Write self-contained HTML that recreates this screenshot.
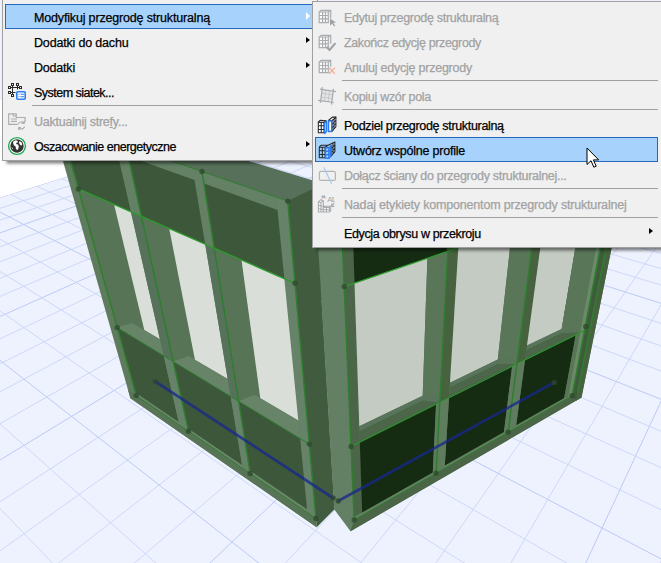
<!DOCTYPE html>
<html><head><meta charset="utf-8"><title>menu</title>
<style>
html,body{margin:0;padding:0;}
body{width:661px;height:563px;overflow:hidden;position:relative;background:#eef2fe;font-family:"Liberation Sans",sans-serif;}
#scene{position:absolute;left:0;top:0;}
#m1,#m2{position:absolute;background:#f0f0f0;border:1px solid #a0a0a0;box-sizing:border-box;}
#m1{left:2px;top:-1px;width:316px;height:162px;box-shadow:3px 3px 3px -0.500px rgba(0,0,0,0.5);}
#m2{left:312px;top:1px;width:352px;height:247px;box-shadow:3px 3px 3px -0.500px rgba(0,0,0,0.5);}
.it{position:absolute;left:2px;right:2px;height:25px;box-sizing:border-box;font-size:12.5px;line-height:25px;color:#000;white-space:nowrap;}
#m1 .it{right:0px;}
#m1 .ar{right:7px;}
#m2 .it{right:5px;}
.it .tx{position:absolute;left:29px;top:2px;-webkit-text-stroke:0.25px currentColor;}
.it.dis{color:#a2a2a2;}
.it.hl{background:#a6d2fc;outline:1px solid #2468bd;outline-offset:-1px;}
.ic{position:absolute;left:2px;top:3px;width:22px;height:20px;}
.ar{position:absolute;right:2px;top:8px;width:0;height:0;border-left:4px solid #000;border-top:3.500px solid transparent;border-bottom:3.500px solid transparent;}
#m2 .ar{right:5px;}
.ar.w{border-left-color:#fff;border-left-width:4.500px;border-top-width:4px;border-bottom-width:4px;top:7.500px;}
.sep{position:absolute;left:29px;right:5px;height:1px;background:#a0a0a0;}
u{text-decoration:underline;}
#cur{position:absolute;left:586px;top:147px;}
</style></head><body>
<svg id="scene" width="661" height="563" viewBox="0 0 661 563">
<defs><clipPath id="gridclip"><polygon points="0,195.5 66,177 120,140 661,140 661,563 0,563"/></clipPath></defs>
<rect x="0" y="0" width="661" height="563" fill="#eef2fe"/>
<g stroke-width="1">
<line x1="5364.3" y1="9635.0" x2="937.8" y2="36.0" stroke="#cdd8f8"/>
<line x1="4242.7" y1="9627.1" x2="924.1" y2="34.9" stroke="#cdd8f8"/>
<line x1="3121.1" y1="9619.1" x2="910.7" y2="33.8" stroke="#cdd8f8"/>
<line x1="1999.5" y1="9611.2" x2="897.6" y2="32.7" stroke="#bccaf4"/>
<line x1="878.0" y1="9603.3" x2="884.6" y2="31.6" stroke="#cdd8f8"/>
<line x1="-243.6" y1="9595.4" x2="871.9" y2="30.6" stroke="#cdd8f8"/>
<line x1="-1365.2" y1="9587.5" x2="859.4" y2="29.5" stroke="#cdd8f8"/>
<line x1="-2486.8" y1="9579.6" x2="847.1" y2="28.5" stroke="#cdd8f8"/>
<line x1="-3608.4" y1="9571.6" x2="835.1" y2="27.5" stroke="#bccaf4"/>
<line x1="-2351.3" y1="5478.5" x2="823.2" y2="26.5" stroke="#cdd8f8"/>
<line x1="-1805.8" y1="3769.1" x2="811.5" y2="25.6" stroke="#cdd8f8"/>
<line x1="-1516.6" y1="2862.8" x2="800.1" y2="24.6" stroke="#cdd8f8"/>
<line x1="-1337.4" y1="2301.3" x2="788.8" y2="23.7" stroke="#cdd8f8"/>
<line x1="-1215.4" y1="1919.2" x2="777.7" y2="22.8" stroke="#bccaf4"/>
<line x1="-1127.1" y1="1642.5" x2="766.8" y2="21.9" stroke="#cdd8f8"/>
<line x1="-1060.2" y1="1432.7" x2="756.0" y2="21.0" stroke="#cdd8f8"/>
<line x1="-1007.7" y1="1268.3" x2="745.4" y2="20.1" stroke="#cdd8f8"/>
<line x1="-965.5" y1="1135.9" x2="735.0" y2="19.2" stroke="#cdd8f8"/>
<line x1="-930.7" y1="1027.1" x2="724.8" y2="18.4" stroke="#bccaf4"/>
<line x1="-901.7" y1="936.0" x2="714.7" y2="17.5" stroke="#cdd8f8"/>
<line x1="-877.0" y1="858.7" x2="704.8" y2="16.7" stroke="#cdd8f8"/>
<line x1="-855.8" y1="792.2" x2="695.0" y2="15.9" stroke="#cdd8f8"/>
<line x1="-837.3" y1="734.4" x2="685.4" y2="15.1" stroke="#cdd8f8"/>
<line x1="-821.2" y1="683.7" x2="675.9" y2="14.3" stroke="#bccaf4"/>
<line x1="-806.9" y1="638.9" x2="666.5" y2="13.5" stroke="#cdd8f8"/>
<line x1="-794.1" y1="599.0" x2="657.3" y2="12.8" stroke="#cdd8f8"/>
<line x1="-782.7" y1="563.3" x2="648.3" y2="12.0" stroke="#cdd8f8"/>
<line x1="-772.4" y1="531.1" x2="639.3" y2="11.3" stroke="#cdd8f8"/>
<line x1="-763.1" y1="501.9" x2="630.5" y2="10.6" stroke="#bccaf4"/>
<line x1="-754.7" y1="475.3" x2="621.8" y2="9.8" stroke="#cdd8f8"/>
<line x1="-746.9" y1="451.0" x2="613.3" y2="9.1" stroke="#cdd8f8"/>
<line x1="-739.8" y1="428.8" x2="604.8" y2="8.4" stroke="#bccaf4"/>
<line x1="-2101.1" y1="9582.3" x2="-651.9" y2="401.3" stroke="#cdd8f8"/>
<line x1="-544.9" y1="9593.3" x2="-573.0" y2="376.6" stroke="#bccaf4"/>
<line x1="1011.3" y1="9604.3" x2="-501.9" y2="354.4" stroke="#cdd8f8"/>
<line x1="2567.6" y1="9615.2" x2="-437.3" y2="334.2" stroke="#cdd8f8"/>
<line x1="4123.8" y1="9626.2" x2="-378.5" y2="315.8" stroke="#cdd8f8"/>
<line x1="4567.3" y1="7906.8" x2="-324.7" y2="299.0" stroke="#bccaf4"/>
<line x1="2846.9" y1="4176.0" x2="-275.3" y2="283.6" stroke="#cdd8f8"/>
<line x1="2222.1" y1="2821.1" x2="-229.8" y2="269.3" stroke="#cdd8f8"/>
<line x1="1899.1" y1="2120.7" x2="-187.7" y2="256.2" stroke="#cdd8f8"/>
<line x1="1701.8" y1="1692.7" x2="-148.7" y2="244.0" stroke="#bccaf4"/>
<line x1="1568.7" y1="1404.2" x2="-112.4" y2="232.6" stroke="#cdd8f8"/>
<line x1="1472.9" y1="1196.5" x2="-78.6" y2="222.1" stroke="#cdd8f8"/>
<line x1="1400.6" y1="1039.8" x2="-47.0" y2="212.2" stroke="#cdd8f8"/>
<line x1="1344.2" y1="917.4" x2="-17.4" y2="202.9" stroke="#bccaf4"/>
<line x1="1298.9" y1="819.1" x2="10.4" y2="194.3" stroke="#cdd8f8"/>
<line x1="1261.7" y1="738.5" x2="36.5" y2="186.1" stroke="#cdd8f8"/>
<line x1="1230.7" y1="671.2" x2="61.1" y2="178.4" stroke="#cdd8f8"/>
<line x1="1204.3" y1="614.1" x2="84.3" y2="171.2" stroke="#bccaf4"/>
<line x1="1181.7" y1="565.1" x2="106.2" y2="164.3" stroke="#cdd8f8"/>
<line x1="1162.1" y1="522.5" x2="127.0" y2="157.8" stroke="#cdd8f8"/>
<line x1="1144.9" y1="485.2" x2="146.7" y2="151.6" stroke="#cdd8f8"/>
<line x1="1129.7" y1="452.3" x2="165.4" y2="145.8" stroke="#bccaf4"/>
<line x1="1116.2" y1="423.0" x2="183.2" y2="140.3" stroke="#cdd8f8"/>
<line x1="1104.1" y1="396.8" x2="200.1" y2="135.0" stroke="#cdd8f8"/>
<line x1="1093.2" y1="373.2" x2="216.2" y2="129.9" stroke="#cdd8f8"/>
<line x1="1083.4" y1="351.8" x2="231.6" y2="125.1" stroke="#bccaf4"/>
<line x1="1074.4" y1="332.3" x2="246.2" y2="120.5" stroke="#cdd8f8"/>
<line x1="1066.2" y1="314.5" x2="260.3" y2="116.1" stroke="#cdd8f8"/>
<line x1="1058.7" y1="298.2" x2="273.7" y2="111.9" stroke="#cdd8f8"/>
<line x1="1051.8" y1="283.2" x2="286.6" y2="107.9" stroke="#bccaf4"/>
<line x1="1045.4" y1="269.4" x2="298.9" y2="104.1" stroke="#cdd8f8"/>
<line x1="1039.4" y1="256.5" x2="310.8" y2="100.4" stroke="#cdd8f8"/>
<line x1="1034.0" y1="244.6" x2="322.1" y2="96.8" stroke="#cdd8f8"/>
<line x1="1028.8" y1="233.5" x2="333.1" y2="93.4" stroke="#bccaf4"/>
<line x1="1024.0" y1="223.1" x2="343.6" y2="90.1" stroke="#cdd8f8"/>
<line x1="1019.6" y1="213.4" x2="353.7" y2="86.9" stroke="#cdd8f8"/>
<line x1="1015.4" y1="204.3" x2="363.4" y2="83.9" stroke="#cdd8f8"/>
<line x1="1011.4" y1="195.8" x2="372.8" y2="81.0" stroke="#bccaf4"/>
<line x1="1007.7" y1="187.7" x2="381.9" y2="78.1" stroke="#cdd8f8"/>
<line x1="1004.2" y1="180.1" x2="390.6" y2="75.4" stroke="#cdd8f8"/>
<line x1="1000.9" y1="173.0" x2="399.1" y2="72.8" stroke="#cdd8f8"/>
<line x1="997.8" y1="166.2" x2="407.2" y2="70.2" stroke="#bccaf4"/>
<line x1="994.8" y1="159.7" x2="415.1" y2="67.7" stroke="#cdd8f8"/>
<line x1="992.0" y1="153.6" x2="422.8" y2="65.3" stroke="#cdd8f8"/>
<line x1="989.3" y1="147.9" x2="430.2" y2="63.0" stroke="#cdd8f8"/>
<line x1="986.8" y1="142.3" x2="437.3" y2="60.8" stroke="#bccaf4"/>
<line x1="984.4" y1="137.1" x2="444.3" y2="58.6" stroke="#cdd8f8"/>
<line x1="982.1" y1="132.1" x2="451.0" y2="56.5" stroke="#cdd8f8"/>
<line x1="979.8" y1="127.3" x2="457.5" y2="54.5" stroke="#cdd8f8"/>
<line x1="977.7" y1="122.7" x2="463.8" y2="52.5" stroke="#bccaf4"/>
<line x1="975.7" y1="118.3" x2="470.0" y2="50.6" stroke="#cdd8f8"/>
<line x1="973.8" y1="114.2" x2="476.0" y2="48.7" stroke="#cdd8f8"/>
<line x1="971.9" y1="110.1" x2="481.8" y2="46.9" stroke="#cdd8f8"/>
<line x1="970.2" y1="106.3" x2="487.4" y2="45.1" stroke="#bccaf4"/>
<line x1="968.5" y1="102.6" x2="492.9" y2="43.4" stroke="#cdd8f8"/>
<line x1="966.8" y1="99.0" x2="498.2" y2="41.8" stroke="#cdd8f8"/>
<line x1="965.2" y1="95.6" x2="503.4" y2="40.1" stroke="#cdd8f8"/>
<line x1="963.7" y1="92.3" x2="508.5" y2="38.6" stroke="#bccaf4"/>
<line x1="962.3" y1="89.2" x2="513.4" y2="37.0" stroke="#cdd8f8"/>
<line x1="960.9" y1="86.1" x2="518.2" y2="35.5" stroke="#cdd8f8"/>
<line x1="959.5" y1="83.2" x2="522.8" y2="34.1" stroke="#cdd8f8"/>
<line x1="958.2" y1="80.3" x2="527.4" y2="32.6" stroke="#bccaf4"/>
<line x1="956.9" y1="77.6" x2="531.8" y2="31.3" stroke="#cdd8f8"/>
<line x1="955.7" y1="75.0" x2="536.2" y2="29.9" stroke="#cdd8f8"/>
<line x1="954.5" y1="72.4" x2="540.4" y2="28.6" stroke="#cdd8f8"/>
<line x1="953.4" y1="69.9" x2="544.5" y2="27.3" stroke="#bccaf4"/>
<line x1="952.3" y1="67.5" x2="548.5" y2="26.0" stroke="#cdd8f8"/>
<line x1="951.2" y1="65.2" x2="552.5" y2="24.8" stroke="#cdd8f8"/>
<line x1="950.2" y1="62.9" x2="556.3" y2="23.6" stroke="#cdd8f8"/>
<line x1="949.2" y1="60.8" x2="560.1" y2="22.4" stroke="#bccaf4"/>
<line x1="948.2" y1="58.7" x2="563.7" y2="21.3" stroke="#cdd8f8"/>
<line x1="947.3" y1="56.6" x2="567.3" y2="20.2" stroke="#cdd8f8"/>
<line x1="946.3" y1="54.6" x2="570.8" y2="19.1" stroke="#cdd8f8"/>
</g>
<polygon points="-739.8,428.8 165.4,145.8 165.4,100.0 -50.0,100.0 -50.0,428.8" fill="#ffffff" />
<polygon points="40.0,98.0 250.0,161.4 340.0,188.8 340.0,300.0 300.0,300.0 288.0,201.2 63.5,161.8" fill="#56705a" />
<polygon points="340.5,200.9 636.4,124.5 581.5,397.6 350.5,531.2 354.2,519.9" fill="#567355" />
<polygon points="315.7,207.3 340.5,200.9 354.6,528.8 350.5,531.2 334.3,509.5" fill="#648064" />
<polygon points="314.2,207.3 315.7,207.3 334.3,509.5 332.8,509.0" fill="#648064" />
<polygon points="340.5,200.9 351.7,198.0 362.2,515.3 354.2,519.9" fill="#4a6548" />
<polygon points="351.7,198.0 451.9,172.2 447.7,251.3 354.5,283.1" fill="#152c13" />
<polygon points="354.5,283.1 427.4,258.2 422.7,395.8 359.3,426.3" fill="#c4cbc3" />
<polygon points="427.4,258.2 447.7,251.3 439.8,402.4 432.9,393.5 422.7,395.8" fill="#5a7659" />
<polygon points="359.3,426.3 422.7,395.8 432.9,393.5 439.8,402.4 359.8,442.1" fill="#58745a" />
<polygon points="359.4,431.2 422.5,400.5 439.8,402.4 359.8,442.1" fill="#4b6649" />
<polygon points="451.9,172.2 463.2,169.2 449.0,397.8 439.8,402.4" fill="#47623f" />
<polygon points="463.2,169.2 544.6,148.2 535.2,221.5 458.3,247.7" fill="#152c13" />
<polygon points="458.3,247.7 512.0,229.4 497.8,359.6 450.0,382.7" fill="#c4cbc3" />
<polygon points="512.0,229.4 535.2,221.5 516.9,364.0 509.3,357.3 497.8,359.6" fill="#5a7659" />
<polygon points="450.0,382.7 497.8,359.6 509.3,357.3 516.9,364.0 449.0,397.8" fill="#58745a" />
<polygon points="449.7,387.3 497.4,364.2 516.9,364.0 449.0,397.8" fill="#4b6649" />
<polygon points="544.6,148.2 554.2,145.7 525.0,360.0 516.9,364.0" fill="#47623f" />
<polygon points="554.2,145.7 618.2,129.2 605.4,197.5 544.3,218.4" fill="#152c13" />
<polygon points="544.3,218.4 582.5,205.4 561.7,328.9 527.0,345.6" fill="#c4cbc3" />
<polygon points="582.5,205.4 605.4,197.5 580.2,332.6 572.8,326.6 561.7,328.9" fill="#5a7659" />
<polygon points="527.0,345.6 561.7,328.9 572.8,326.6 580.2,332.6 525.0,360.0" fill="#58745a" />
<polygon points="526.4,350.0 561.0,333.2 580.2,332.6 525.0,360.0" fill="#4b6649" />
<polygon points="354.1,517.0 564.2,398.0 572.1,395.8 354.2,519.9" fill="#648261" />
<polygon points="354.2,519.9 572.1,395.8 581.5,397.6 350.5,531.2" fill="#4a6647" />
<polygon points="359.8,442.1 436.1,404.2 432.8,472.4 362.1,512.5" fill="#152c13" />
<polygon points="449.0,397.8 512.1,366.4 504.0,432.1 444.8,465.6" fill="#152c13" />
<polygon points="525.0,360.0 575.8,334.8 564.2,398.0 516.1,425.2" fill="#152c13" />
<polygon points="436.1,404.2 449.0,397.8 444.6,468.4 432.7,475.2" fill="#5f7d5e" />
<polygon points="512.1,366.4 525.0,360.0 515.8,427.9 503.6,434.8" fill="#5f7d5e" />
<polygon points="582.5,205.4 605.4,197.5 580.2,332.6 561.7,328.9" fill="#5a7659" />
<polygon points="575.8,334.8 580.2,332.6 567.9,398.2 564.2,398.0" fill="#587556" />
<polygon points="618.2,129.2 623.2,127.9 572.1,395.8 567.9,398.2" fill="#6a8a68" />
<polygon points="623.2,127.9 629.9,126.2 576.1,400.7 572.1,395.8" fill="#3f5a3c" />
<polygon points="629.9,126.2 636.4,124.5 581.5,397.6 576.1,400.7" fill="#47623f" />
<polyline points="344.2,286.6 605.4,197.5" fill="none" stroke="#2c9a2c" stroke-width="1.2" />
<polyline points="351.1,446.5 584.6,330.4" fill="none" stroke="#2c9a2c" stroke-width="1.1" />
<polyline points="354.2,519.9 572.1,395.8" fill="none" stroke="#2f7d2f" stroke-width="1.0" />
<polyline points="340.5,200.9 354.2,519.9" fill="none" stroke="#2f7d2f" stroke-width="1.5" />
<polyline points="451.9,172.2 436.1,473.3" fill="none" stroke="#2f7d2f" stroke-width="1.5" />
<polyline points="544.6,148.2 508.1,432.3" fill="none" stroke="#2f7d2f" stroke-width="1.5" />
<polyline points="623.2,127.9 572.1,395.8" fill="none" stroke="#2f7d2f" stroke-width="1.5" />
<polyline points="629.9,126.2 577.6,392.7" fill="none" stroke="#2f7d2f" stroke-width="1.5" />
<polygon points="287.7,201.1 312.4,189.0 314.5,188.0 334.3,509.5 316.7,527.3" fill="#415b3f" />
<polygon points="51.1,119.2 287.7,201.1 316.7,527.3 130.4,398.2" fill="#5f7b5d" />
<polygon points="59.7,122.2 287.7,201.1 295.0,283.3 78.4,188.9" fill="#648166" />
<polygon points="135.4,392.5 315.7,515.2 315.9,518.5 136.3,395.6" fill="#6b876a" />
<polygon points="128.1,390.0 315.9,518.5 316.7,527.3 130.4,398.2" fill="#587456" />
<polygon points="276.2,197.1 287.7,201.1 315.9,518.5 307.4,512.6" fill="#66836a" />
<polygon points="62.6,132.6 117.3,152.3 130.9,211.8 78.4,188.9" fill="#3d573b" />
<polygon points="78.4,188.9 114.1,204.5 144.3,330.1 132.1,322.9 117.2,327.6" fill="#587456" />
<polygon points="114.1,204.5 130.9,211.8 159.9,339.2 144.3,330.1" fill="#d9dfd8" />
<polygon points="117.2,327.6 132.1,322.9 159.9,339.2 163.7,355.7" fill="#688468" />
<polygon points="117.2,327.6 163.7,355.7 178.7,422.0 135.4,392.5" fill="#3d573b" />
<polygon points="128.2,156.2 194.5,180.1 205.2,244.2 141.4,216.4" fill="#3d573b" />
<polygon points="141.4,216.4 169.2,228.5 195.0,359.9 188.6,356.1 173.2,361.6" fill="#587456" />
<polygon points="169.2,228.5 205.2,244.2 227.7,379.1 195.0,359.9" fill="#d9dfd8" />
<polygon points="173.2,361.6 188.6,356.1 227.7,379.1 230.6,396.4" fill="#688468" />
<polygon points="173.2,361.6 230.6,396.4 242.1,465.1 187.8,428.2" fill="#3d573b" />
<polygon points="204.0,183.5 277.5,210.0 284.3,278.6 214.3,248.1" fill="#3d573b" />
<polygon points="214.3,248.1 241.5,260.0 260.3,398.3 254.4,394.8 238.7,401.3" fill="#587456" />
<polygon points="241.5,260.0 284.3,278.6 298.3,420.6 260.3,398.3" fill="#d9dfd8" />
<polygon points="238.7,401.3 254.4,394.8 298.3,420.6 300.1,438.5" fill="#688468" />
<polygon points="238.7,401.3 300.1,438.5 307.0,509.3 249.7,470.3" fill="#3d573b" />
<polygon points="130.9,211.8 141.4,216.4 173.2,361.6 163.7,355.7" fill="#56725a" />
<polygon points="163.7,355.7 173.2,361.6 188.5,431.3 179.4,425.1" fill="#66836a" />
<polygon points="205.2,244.2 214.3,248.1 238.7,401.3 230.6,396.4" fill="#56725a" />
<polygon points="230.6,396.4 238.7,401.3 250.2,473.5 242.7,468.4" fill="#66836a" />
<polyline points="59.7,122.2 136.3,395.6" fill="none" stroke="#2f7d2f" stroke-width="1.5" />
<polyline points="125.8,145.1 188.5,431.3" fill="none" stroke="#2f7d2f" stroke-width="1.5" />
<polyline points="202.0,171.5 250.2,473.5" fill="none" stroke="#2f7d2f" stroke-width="1.5" />
<polyline points="287.7,201.1 315.9,518.5" fill="none" stroke="#2f7d2f" stroke-width="1.5" />
<polyline points="59.7,122.2 287.7,201.1" fill="none" stroke="#2f7d2f" stroke-width="1.0" />
<polyline points="78.4,188.9 295.0,283.3" fill="none" stroke="#2c9a2c" stroke-width="1.3" />
<polyline points="117.2,327.6 309.3,444.1" fill="none" stroke="#2f7d2f" stroke-width="1.0" />
<polyline points="136.3,395.6 315.9,518.5" fill="none" stroke="#2f7d2f" stroke-width="1.0" />
<polyline points="155.5,381.6 333.1,498.0" fill="none" stroke="#18288c" stroke-width="2.7" stroke-opacity="0.78" stroke-linecap="round"/>
<polyline points="338.2,501.0 554.3,382.4" fill="none" stroke="#18288c" stroke-width="2.7" stroke-opacity="0.78" stroke-linecap="round"/>
<circle cx="78.4" cy="188.9" r="2.7" fill="#2c4729" fill-opacity="0.72"/>
<circle cx="117.2" cy="327.6" r="2.7" fill="#2c4729" fill-opacity="0.72"/>
<circle cx="136.3" cy="395.6" r="2.7" fill="#2c4729" fill-opacity="0.72"/>
<circle cx="188.5" cy="431.3" r="2.7" fill="#2c4729" fill-opacity="0.72"/>
<circle cx="250.2" cy="473.5" r="2.7" fill="#2c4729" fill-opacity="0.72"/>
<circle cx="315.9" cy="518.5" r="2.7" fill="#2c4729" fill-opacity="0.72"/>
<circle cx="309.3" cy="444.1" r="2.7" fill="#2c4729" fill-opacity="0.72"/>
<circle cx="295.0" cy="283.3" r="2.7" fill="#2c4729" fill-opacity="0.72"/>
<circle cx="287.7" cy="201.1" r="2.7" fill="#2c4729" fill-opacity="0.72"/>
<circle cx="202.0" cy="171.5" r="2.7" fill="#2c4729" fill-opacity="0.72"/>
<circle cx="344.2" cy="286.6" r="2.7" fill="#2c4729" fill-opacity="0.72"/>
<circle cx="351.1" cy="446.5" r="2.7" fill="#2c4729" fill-opacity="0.72"/>
<circle cx="354.2" cy="519.9" r="2.7" fill="#2c4729" fill-opacity="0.72"/>
<circle cx="436.1" cy="473.3" r="2.7" fill="#2c4729" fill-opacity="0.72"/>
<circle cx="508.1" cy="432.3" r="2.7" fill="#2c4729" fill-opacity="0.72"/>
<circle cx="572.1" cy="395.8" r="2.7" fill="#2c4729" fill-opacity="0.72"/>
<circle cx="585.8" cy="326.4" r="2.7" fill="#2c4729" fill-opacity="0.72"/>
<circle cx="155.5" cy="381.6" r="2.7" fill="#2c4729" fill-opacity="0.72"/>
<circle cx="554.3" cy="382.4" r="2.7" fill="#2c4729" fill-opacity="0.72"/>
<circle cx="333.1" cy="498.0" r="2.7" fill="#2c4729" fill-opacity="0.72"/>
<circle cx="338.2" cy="501.0" r="2.7" fill="#2c4729" fill-opacity="0.72"/>
</svg>
<div id="m1">
<div class="it hl" style="top:4px"><span class="tx" style="letter-spacing:-0.167px">Modyfikuj przegrodę strukturalną</span><div class="ar w"></div></div>
<div class="it" style="top:29px"><span class="tx" style="letter-spacing:-0.175px">Dodatki do dachu</span><div class="ar"></div></div>
<div class="it" style="top:54px"><span class="tx" style="letter-spacing:-0.199px">Dodatki</span><div class="ar"></div></div>
<div class="it" style="top:79px"><div class="ic"><svg width="20" height="20" viewBox="0 0 20 20"><g fill="none" stroke="#2b2b2b" stroke-width="1"><path d="M2.500 5.500h11M2.500 10.500h6M5.500 2.500v11M10.500 2.500v5"/></g><g fill="#f0f0f0" stroke="#2b2b2b" stroke-width="1"><rect x="4.500" y="1.500" width="2" height="2"/><rect x="9.500" y="1.500" width="2" height="2"/><rect x="1.500" y="4.500" width="2" height="2"/><rect x="12.500" y="4.500" width="2" height="2"/><rect x="1.500" y="9.500" width="2" height="2"/><rect x="4.500" y="12.500" width="2" height="2"/></g><rect x="9.800" y="9.800" width="8.400" height="7.400" rx="1" fill="#fff" stroke="#2d7cf0" stroke-width="1.600"/><path d="M11.500 12.300h1M13.500 12.300h3.500M11.500 14.800h1M13.500 14.800h3.500" stroke="#2d7cf0" stroke-width="1.100"/></svg></div><span class="tx" style="letter-spacing:-0.515px">System siatek...</span></div>
<div class="sep" style="top:105px"></div>
<div class="it dis" style="top:108px"><div class="ic"><svg width="20" height="20" viewBox="0 0 20 20"><g fill="none" stroke="#adadad" stroke-width="1.200"><path d="M10.700 13.300H1.700V2.800h7.500v3.700h8.900v4.500"/><path d="M6.200 2.800v2.200h3"/><path d="M4 8h6M4 10.300h6"/><path d="M11.300 13.200a3.300 3.300 0 0 1 5.600-1.200M17.600 15.500a3.300 3.300 0 0 1-5.600 1.500"/><path d="M17.200 9.800v2.500h-2.500M11.700 19v-2.300h2.300"/></g></svg></div><span class="tx" style="letter-spacing:-0.241px">Uaktualnij stre<u>f</u>y...</span></div>
<div class="it" style="top:133px"><div class="ic"><svg width="20" height="20" viewBox="0 0 20 20"><circle cx="10" cy="10" r="8.400" fill="#fff" stroke="#1fa850" stroke-width="1.400"/><circle cx="10" cy="10" r="6.700" fill="#333"/><path d="M6.300 5.500l2.200-1.200 2 .5 .3 1.500 -1.500.7 -.2 1 1.800.6 1 1.700 -.6 2.500 -1.200 1.500 -1.200-1.800 -.3-2 -1.700-1.200 -.8-1.800zM12.300 5.300l1.800.8 1.200 2 -1 1.700 -1.500-1.200 -.8-1.800zM4.500 11l1.200 1 .3 1.500 -1-1z" fill="#fff"/></svg></div><span class="tx" style="letter-spacing:-0.482px">Oszacowanie energetyczne</span><div class="ar"></div></div>
</div>
<div id="m2">
<div class="it dis" style="top:2px"><div class="ic"><svg width="22" height="20" viewBox="0 0 22 20"><rect x="2.200" y="5" width="9.100" height="10.700" fill="#fbfbfb"/><g fill="none" stroke="#a9adb0" stroke-width="1.200"><path d="M2.200 5h9.100v10.700h-9.100zM2.200 5l2.100-1.700h9.400v8.5 M11.300 5l2.400-1.700M5.600 5v10.700M8.500 5v10.700M2.200 8.500h9.100M2.200 11.900h9.100"/></g><path d="M13 11.800L19 15.300 16.300 15.900 18.300 18.700 17.100 19.500 15.200 16.700 13 18.400z" fill="#9ea2a6"/></svg></div><span class="tx" style="letter-spacing:-0.306px">Edytuj przegrodę strukturalną</span></div>
<div class="it dis" style="top:27px"><div class="ic"><svg width="22" height="20" viewBox="0 0 22 20"><rect x="2.200" y="5" width="9.100" height="10.700" fill="#fbfbfb"/><g fill="none" stroke="#a9adb0" stroke-width="1.200"><path d="M2.200 5h9.100v10.700h-9.100zM2.200 5l2.100-1.700h9.400v8.5 M11.300 5l2.400-1.700M5.600 5v10.700M8.500 5v10.700M2.200 8.500h9.100M2.200 11.900h9.100"/></g><path d="M9.600 14.900l3 3 5.800-6.800" fill="none" stroke="#9ea2a6" stroke-width="2.200"/></svg></div><span class="tx" style="letter-spacing:-0.375px">Zakończ edycję przegrody</span></div>
<div class="it dis" style="top:52px"><div class="ic"><svg width="22" height="20" viewBox="0 0 22 20"><rect x="2.200" y="5" width="9.100" height="10.700" fill="#fbfbfb"/><g fill="none" stroke="#a9adb0" stroke-width="1.200"><path d="M2.200 5h9.100v10.700h-9.100zM2.200 5l2.100-1.700h9.400v6.5 M11.300 5l2.400-1.700M5.600 5v10.700M8.500 5v10.700M2.200 8.500h9.100M2.200 11.900h9.100"/></g><path d="M12.100 10.600l5.800 6.300M17.900 10.600l-5.800 6.300" fill="none" stroke="#f7ab98" stroke-width="1.400"/></svg></div><span class="tx" style="letter-spacing:-0.236px">Anuluj edycję przegrody</span></div>
<div class="sep" style="top:78px"></div>
<div class="it dis" style="top:81px"><div class="ic"><svg width="22" height="20" viewBox="0 0 22 20"><path d="M5.100 3.500L16.300 5.200 14.800 16.200 3.700 14.800z" fill="#e6e6e6"/><g fill="none" stroke="#c9c9c9" stroke-width="1"><path d="M8.800 4.100L7.400 15.300M12.600 4.600L11.100 15.700M4.600 7.300L15.800 8.900M4.200 11L15.300 12.500"/></g><g fill="none" stroke="#a9adb0" stroke-width="1.250"><path d="M5.400 1.100L3.400 16.800M16.500 2.900L14.500 18.700M3 3.200L19 5.600M1 14.400L16.900 16.500"/></g></svg></div><span class="tx" style="letter-spacing:-0.295px">Kopiuj wzór pola</span></div>
<div class="sep" style="top:107px"></div>
<div class="it" style="top:110px"><div class="ic"><svg width="22" height="20" viewBox="0 0 22 20"><g fill="#fff" stroke="#23292d" stroke-width="1.050" stroke-linejoin="round"><path d="M1.300 7.200H7V17.800H1.300z"/><path d="M1.300 7.200L3 5.300 9.300 5.700 7 7.200z" fill="#e9e9e9"/><path d="M4.250 7.200V17.800M1.300 10.800H7M1.300 14.400H7" fill="none"/><path d="M15 5.700L18.900 2.100V11.600L15 16.400z"/><path d="M11.400 5.500L15.300 2.100H18.900L15 5.700z" fill="#e9e9e9"/><path d="M17 3.900V14M15 9.300L18.900 5.300M15 12.800L18.900 8.500" fill="none"/></g><g fill="#fdfbf3" stroke="#2d7cf0" stroke-width="1.450" stroke-linejoin="round"><path d="M7.600 8.200L9.600 6.400V16.300L7.600 18.500z"/><path d="M11.500 6H14.700V16.400H11.500z"/></g></svg></div><span class="tx" style="letter-spacing:-0.328px">Podziel przegrodę strukturalną</span></div>
<div class="it hl" style="top:135px"><div class="ic"><svg width="22" height="20" viewBox="0 0 22 20"><g fill="none" stroke="#23292d" stroke-width="1.050" stroke-linejoin="round"><path d="M2.300 7.200H8.100V17.800H2.300zM5.300 7.200V17.800M2.300 10.800H8.100M2.300 14.400H8.100"/><path d="M2.300 7.200L4 5.300H11.100L17.900 2V11.600L14 16.100V5M8.100 7.200L11.100 5.300M16 3V13.900M14 8.500L17.900 5.200M14 12.400L17.900 8.400"/></g><g fill="none" stroke="#2d7cf0" stroke-width="1.500" stroke-linejoin="round"><path d="M8.500 7.700H11.900V18.200H8.500zM8.500 11.200H11.900M8.500 14.700H11.900"/><path d="M11.900 7.700L13.900 6V16L11.900 18.200M11.900 11.200L13.900 9.300M11.900 14.700L13.900 12.700"/></g></svg></div><span class="tx" style="letter-spacing:-0.216px">Utwórz wspólne profile</span></div>
<div class="it dis" style="top:160px"><div class="ic"><svg width="22" height="20" viewBox="0 0 22 20"><rect x="2.400" y="6.400" width="16" height="9" rx="1.500" fill="none" stroke="#b4b4b4" stroke-width="1.200"/><path d="M6.800 2.200l7.800 16.600" stroke="#a9c8f5" stroke-width="1.200"/></svg></div><span class="tx" style="letter-spacing:-0.303px">Dołącz ściany do przegrody strukturalnej...</span></div>
<div class="sep" style="top:186px"></div>
<div class="it dis" style="top:189px"><div class="ic"><svg width="22" height="20" viewBox="0 0 22 20"><g fill="#f6f6f6" stroke="#a9adb0" stroke-width="1.100" stroke-linejoin="round"><path d="M1.400 7.800L3.800 5.700 6.300 6.700V13.400L8 12.200H13.700V16.600L12.500 18H1.400z"/><path d="M1.400 7.800L4 8.700 6.300 6.700M4 8.700V18M1.400 11.300L4 12M1.400 14.700L4 15.300M4 12H6.300M4 15.300H6.300M6.300 13.400V18M6.300 13.400H12.500V18M9.400 13.400V18M6.300 15.700H12.500M12.500 13.400L13.700 12.200" fill="none"/></g><g fill="none" stroke="#a9adb0" stroke-width="1.200"><path d="M8.600 4.300L5.600 2.300M5.300 4.600V2.100H8.100"/><path d="M17.300 8.800L15 12M14.700 9.500V12.300H17.300"/></g><text x="10.300" y="7.800" font-family="Liberation Sans" font-size="8" fill="#a3a7aa" textLength="8">A1</text></svg></div><span class="tx" style="letter-spacing:-0.184px">Nadaj etykiety komponentom przegrody strukturalnej</span></div>
<div class="sep" style="top:215px"></div>
<div class="it" style="top:218px"><span class="tx" style="letter-spacing:-0.364px">Edycja obrysu w przekroju</span><div class="ar"></div></div>
</div><svg id="cur" width="14" height="22" viewBox="0 0 14 22"><path d="M1 1v16.500l4-3.800 2.800 6.500 2.400-1-2.800-6.300h5.300z" fill="#fff" stroke="#000" stroke-width="1" stroke-linejoin="miter"/></svg>
</body></html>
